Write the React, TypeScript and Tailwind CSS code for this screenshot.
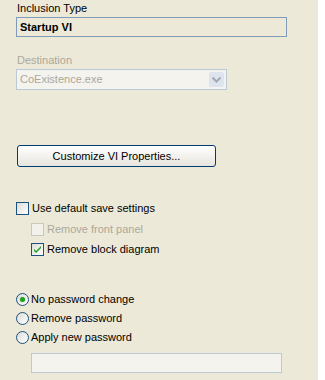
import React from 'react'

function CheckBox({ checked = false, disabled = false }: { checked?: boolean; disabled?: boolean }) {
  return (
    <div
      className={
        'w-[13px] h-[13px] shrink-0 border flex items-center justify-center ' +
        (disabled
          ? 'border-[#cac8bb] bg-[#f2f1ea]'
          : 'border-[#1c5180] bg-gradient-to-br from-[#dcdcd7] to-white')
      }
    >
      {checked && (
        <svg width="9" height="9" viewBox="0 0 9 9">
          <path d="M1 4 L3 6 L8 1 L8 3 L3 8 L1 6 Z" fill="#21a121" />
        </svg>
      )}
    </div>
  )
}

function Radio({ checked = false }: { checked?: boolean }) {
  return (
    <div className="w-[13px] h-[13px] shrink-0 rounded-full border border-[#1c5180] bg-gradient-to-br from-[#dcdcd7] to-white flex items-center justify-center">
      {checked && <div className="w-[5px] h-[5px] rounded-full bg-[#21a121] shadow-[0_0_1px_#7fd27f]" />}
    </div>
  )
}

export default function App() {
  return (
    <div className="w-[325px] h-[380px] bg-white">
      <div className="w-[318px] h-[380px] bg-[#ece9d8] pl-4 pt-[2px] text-[11px] leading-[13px] text-black font-['Liberation_Sans',Arial,sans-serif]">
        <div className="h-[15px] pl-px">Inclusion Type</div>
        <div className="w-[271px] h-[20px] border border-[#7f9db9] px-[3px] flex items-center font-bold">
          Startup VI
        </div>

        <div className="mt-[17px] h-[15px] pl-px text-[#aca899]">Destination</div>
        <div className="w-[211px] h-[21px] border border-[#b9c9d6] bg-[#f4f3ee] flex items-center justify-between pl-[3px] pr-[2px]">
          <span className="text-[#aca899]">CoExistence.exe</span>
          <div className="w-[15px] h-[15px] rounded-[2px] bg-[#dde4ef] flex items-center justify-center">
            <svg width="9" height="6" viewBox="0 0 9 6">
              <path d="M0.5 0.5 L4.5 4.5 L8.5 0.5" stroke="#a7a9b0" strokeWidth="2" fill="none" />
            </svg>
          </div>
        </div>

        <button className="mt-[55px] ml-px w-[199px] h-[22px] rounded-[3px] border border-[#003c74] bg-gradient-to-b from-white to-[#e6e5de] text-black text-[11px] leading-[13px] flex items-center justify-center">
          Customize VI Properties...
        </button>

        <div className="mt-[35px] h-[13px] flex items-center gap-[3px]">
          <CheckBox />
          <span>Use default save settings</span>
        </div>
        <div className="mt-[8px] ml-[15px] h-[13px] flex items-center gap-[3px]">
          <CheckBox disabled />
          <span className="text-[#aca899]">Remove front panel</span>
        </div>
        <div className="mt-[7px] ml-[15px] h-[13px] flex items-center gap-[3px]">
          <CheckBox checked />
          <span>Remove block diagram</span>
        </div>

        <div className="mt-[37px] h-[13px] flex items-center gap-[2px]">
          <Radio checked />
          <span>No password change</span>
        </div>
        <div className="mt-[6px] h-[13px] flex items-center gap-[2px]">
          <Radio />
          <span>Remove password</span>
        </div>
        <div className="mt-[6px] h-[13px] flex items-center gap-[2px]">
          <Radio />
          <span>Apply new password</span>
        </div>

        <div className="mt-[9px] ml-[15px] w-[251px] h-[20px] border border-[#b9c9d6] bg-[#f4f3ee]" />
      </div>
    </div>
  )
}
